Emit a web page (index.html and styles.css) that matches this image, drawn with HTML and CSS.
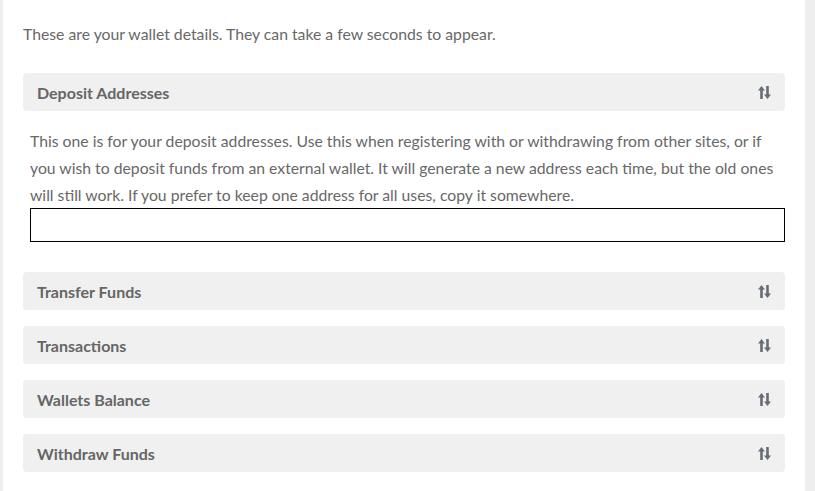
FILE: index.html
```html
<!DOCTYPE html>
<html lang="en">

<head>
    <meta charset="UTF-8">
    <meta name="viewport" content="width=device-width, initial-scale=1.0">
    <title>Wallet</title>
    <link rel="stylesheet" href="styles.css">
</head>

<body>

<div class="page">
    <div class="content">
        <p class="intro">These are your wallet details. They can take a few seconds to appear.</p>

        <!-- Deposit Addresses (open) -->
        <div class="panel">
            <div class="panel-heading">
                <span>Deposit Addresses</span>
                <svg class="toggle" viewBox="0 0 13 13" width="13" height="13">
                    <path d="M3.5 0 L7 4.5 L4.8 4.5 L4.8 13 L2.2 13 L2.2 4.5 L0 4.5 Z" fill="#676c75"/>
                    <path d="M9.5 13 L13 8.5 L10.8 8.5 L10.8 0 L8.2 0 L8.2 8.5 L6 8.5 Z" fill="#676c75"/>
                </svg>
            </div>
            <div class="panel-body">
                <p>This one is for your deposit addresses. Use this when registering with or withdrawing from other sites, or if you wish to deposit funds from an external wallet. It will generate a new address each time, but the old ones will still work. If you prefer to keep one address for all uses, copy it somewhere.</p>
                <input type="text" class="address-box">
            </div>
        </div>

        <div class="panel">
            <div class="panel-heading">
                <span>Transfer Funds</span>
                <svg class="toggle" viewBox="0 0 13 13" width="13" height="13">
                    <path d="M3.5 0 L7 4.5 L4.8 4.5 L4.8 13 L2.2 13 L2.2 4.5 L0 4.5 Z" fill="#676c75"/>
                    <path d="M9.5 13 L13 8.5 L10.8 8.5 L10.8 0 L8.2 0 L8.2 8.5 L6 8.5 Z" fill="#676c75"/>
                </svg>
            </div>
        </div>

        <div class="panel">
            <div class="panel-heading">
                <span>Transactions</span>
                <svg class="toggle" viewBox="0 0 13 13" width="13" height="13">
                    <path d="M3.5 0 L7 4.5 L4.8 4.5 L4.8 13 L2.2 13 L2.2 4.5 L0 4.5 Z" fill="#676c75"/>
                    <path d="M9.5 13 L13 8.5 L10.8 8.5 L10.8 0 L8.2 0 L8.2 8.5 L6 8.5 Z" fill="#676c75"/>
                </svg>
            </div>
        </div>

        <div class="panel">
            <div class="panel-heading">
                <span>Wallets Balance</span>
                <svg class="toggle" viewBox="0 0 13 13" width="13" height="13">
                    <path d="M3.5 0 L7 4.5 L4.8 4.5 L4.8 13 L2.2 13 L2.2 4.5 L0 4.5 Z" fill="#676c75"/>
                    <path d="M9.5 13 L13 8.5 L10.8 8.5 L10.8 0 L8.2 0 L8.2 8.5 L6 8.5 Z" fill="#676c75"/>
                </svg>
            </div>
        </div>

        <div class="panel">
            <div class="panel-heading">
                <span>Withdraw Funds</span>
                <svg class="toggle" viewBox="0 0 13 13" width="13" height="13">
                    <path d="M3.5 0 L7 4.5 L4.8 4.5 L4.8 13 L2.2 13 L2.2 4.5 L0 4.5 Z" fill="#676c75"/>
                    <path d="M9.5 13 L13 8.5 L10.8 8.5 L10.8 0 L8.2 0 L8.2 8.5 L6 8.5 Z" fill="#676c75"/>
                </svg>
            </div>
        </div>
    </div>
</div>

</body>
</html>
```

FILE: styles.css
```css
body {
    margin: 0;
    background-color: #eeeeee;
    font-family: Lato, "Open Sans", sans-serif;
    color: #686868;
}
.page {
    margin-left: 3px;
    width: 802px;
    min-height: 491px;
    background-color: #ffffff;
}
.content {
    padding: 20px 20px 20px 20px;
}
.intro {
    margin: 0 0 26px 0;
    font-size: 15.75px;
    line-height: 27px;
}
.panel {
    margin-bottom: 16px;
}
.panel-heading {
    display: flex;
    justify-content: space-between;
    align-items: center;
    height: 38px;
    padding: 0 14px;
    background-color: #f0f0f0;
    border-radius: 4px;
    font-size: 16px;
    font-weight: bold;
    color: #666666;
}
.panel-body {
    padding: 16px 0 14px 7px;
}
.panel-body p {
    margin: 0;
    font-size: 15.75px;
    line-height: 27px;
}
.address-box {
    display: block;
    box-sizing: border-box;
    width: 100%;
    height: 34px;
    margin-top: 0;
    border: 1px solid #000000;
    border-radius: 0;
    padding: 0 8px;
}
```
